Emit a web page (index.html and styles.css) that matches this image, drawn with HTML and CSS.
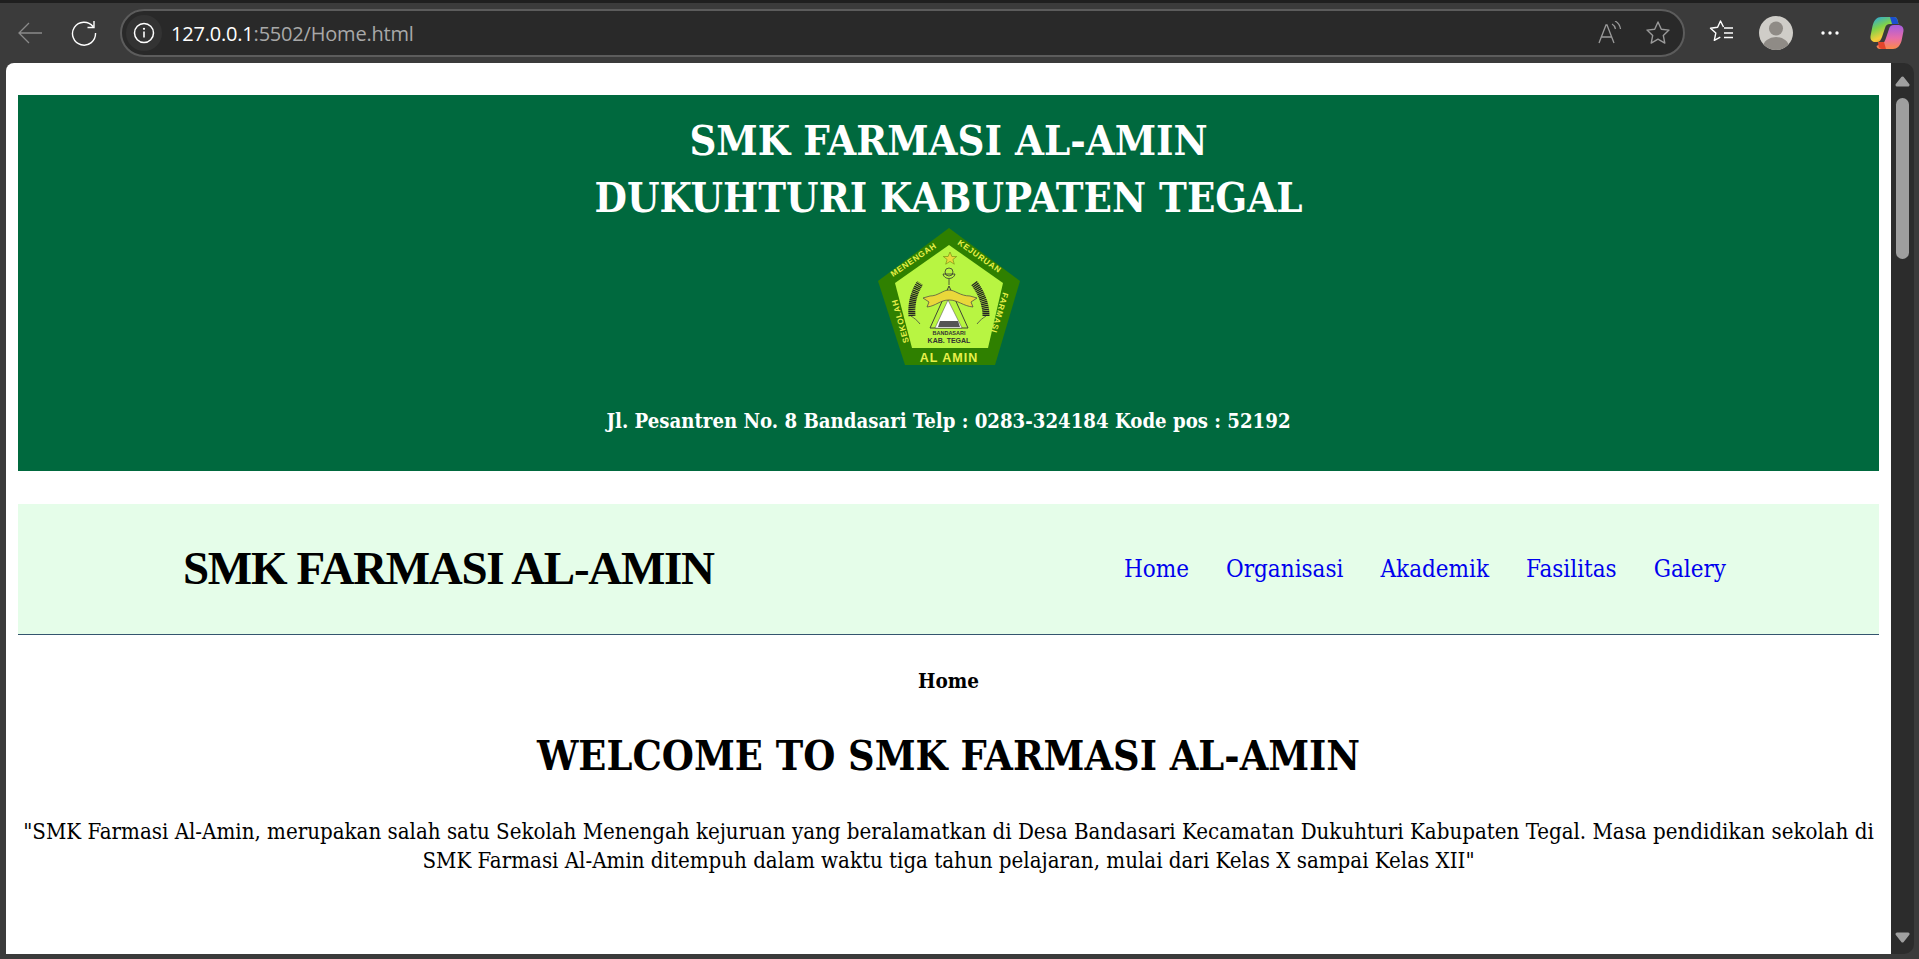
FILE: index.html
```html
<!DOCTYPE html>
<html lang="id">
<head>
<meta charset="utf-8">
<title>Home</title>
<link rel="stylesheet" href="styles.css">
</head>
<body>
<div class="window">
  <div class="tabstrip"></div>
  <header class="toolbar">
    <svg class="tool back" viewBox="0 0 26 26"><path d="M25 13H2M12 3 2 13l10 10" fill="none" stroke="#8a8a8a" stroke-width="1.3"/></svg>
    <svg class="tool reload" viewBox="0 0 26 26"><path d="M22 6.500A11.500 11.500 0 1 0 24.500 13M23 1v6.500h-6.500" fill="none" stroke="#fff" stroke-width="1.400"/></svg>
    <div class="omnibox">
      <span class="site-info"><svg viewBox="0 0 22 22" class="info"><circle cx="11" cy="11" r="9.500" fill="none" stroke="#fff" stroke-width="1.500"/><path d="M11 9.500v6" stroke="#fff" stroke-width="1.600"/><circle cx="11" cy="6.800" r="1.100" fill="#fff"/></svg></span>
      <span class="url"><span class="host">127.0.0.1</span>:5502/Home.html</span>
      <svg class="omni-icon read" viewBox="0 0 24 24"><path d="M1 22 8 4h1l7 18M3.500 16h10M14 3c2 1 3 3 3.500 5M17 0c3 1.500 5 4.500 5.500 8" fill="none" stroke="#9a9a9a" stroke-width="1.300"/></svg>
      <svg class="omni-icon star" viewBox="0 0 26 26"><path d="m13 2 3.300 7.200 7.700.9-5.700 5.300 1.500 7.700-6.800-3.900-6.800 3.900 1.500-7.700L2 10.100l7.700-.9z" fill="none" stroke="#9a9a9a" stroke-width="1.400" stroke-linejoin="round"/></svg>
    </div>
    <svg class="tool favs" viewBox="0 0 26 26"><path d="M14.500 7 11.500 1 8.600 7.300 1.500 8.200l5.300 4.900-1.500 7.300 6-3.300M15 8h9M15 13h9M15 17.500h9" fill="none" stroke="#fff" stroke-width="1.400" stroke-linejoin="round"/></svg>
    <svg class="avatar" viewBox="0 0 34 34"><defs><clipPath id="av"><circle cx="17" cy="17" r="17"/></clipPath></defs><circle cx="17" cy="17" r="17" fill="#cfcdc8"/><g clip-path="url(#av)" fill="#8f8b86"><circle cx="17" cy="12.500" r="7"/><ellipse cx="17" cy="31" rx="13" ry="10"/></g></svg>
    <svg class="tool more" viewBox="0 0 18 6"><circle cx="2" cy="3" r="1.700" fill="#fff"/><circle cx="9" cy="3" r="1.700" fill="#fff"/><circle cx="16" cy="3" r="1.700" fill="#fff"/></svg>
    <svg class="copilot" viewBox="0 0 34 34">
      <defs>
        <linearGradient id="cpl" x1="0" y1="0" x2="0.500" y2="1"><stop offset="0" stop-color="#1fa2f0"/><stop offset=".45" stop-color="#7fd24a"/><stop offset=".8" stop-color="#f4cf3a"/><stop offset="1" stop-color="#f59a3c"/></linearGradient>
        <linearGradient id="cpr" x1="0.500" y1="0" x2="0.500" y2="1"><stop offset="0" stop-color="#a45de0"/><stop offset=".55" stop-color="#e86ca8"/><stop offset="1" stop-color="#f98a4a"/></linearGradient>
      </defs>
      <path d="M18 1h6c2 0 3 1 3.500 3l1 4H20c-3 0-4 1-5 4l-3 9c-1 3-2.500 5-5 5H5c-3 0-5-2.500-4.500-6l2-10C4 4 7 1 11 1z" fill="url(#cpl)"/>
      <path d="M16 33h-6c-2 0-3-1-3.500-3L12 27c2 0 3-2 4-5l3-9c1-3 2-4 5-4h4c3 0 6 2 5.500 6l-2 10C30 30 27 33 23 33z" fill="url(#cpr)"/>
      <path d="M20 1h4c2 0 3 1 3.500 3l1 4H22z" fill="#1b4fd0"/>
      <path d="M8 26h6l2 7h-4c-2 0-3-1-3.500-3z" fill="#e2452b"/>
    </svg>
  </header>
  <div class="viewport">
    <main class="page">
      <section class="banner">
        <h1 class="banner-title">SMK FARMASI AL-AMIN<br>DUKUHTURI KABUPATEN TEGAL</h1>
        <svg class="logo" viewBox="0 0 142 138">
          <defs>
            <path id="arc-top-l" d="M15 49 62 17 90 -2"/>
            <path id="arc-top-r" d="M79 16 126 49 150 66"/>
            <path id="arc-left" d="M31 114 17 64 8 32"/>
            <path id="arc-right" d="M125 64 110 114 100 146"/>
          </defs>
          <path d="M71 0 142 53 117 137H27L0 53z" fill="#2f8000"/>
          <path d="M71 17 125 55 110 120H34L17 55z" fill="#b8f542"/>
          <path d="m72 24 1.900 4.500h4.800l-3.800 3 1.400 4.700-4.300-2.800-4.300 2.800 1.400-4.700-3.800-3h4.800z" fill="#e9d83a" stroke="#6a8a10" stroke-width=".6"/>
          <text class="logo-ring"><textPath href="#arc-top-l">MENENGAH</textPath></text>
          <text class="logo-ring"><textPath href="#arc-top-r">KEJURUAN</textPath></text>
          <text class="logo-ring"><textPath href="#arc-left">SEKOLAH</textPath></text>
          <text class="logo-ring"><textPath href="#arc-right">FARMASI</textPath></text>
          <circle cx="71" cy="44" r="4" fill="none" stroke="#333" stroke-width=".8"/>
          <path d="M65 46c1 6 11 6 12 0z" fill="none" stroke="#333" stroke-width=".8"/>
          <path d="M71 51v6" stroke="#333" stroke-width=".8"/>
          <path d="M71 58 52 100h38z" fill="#b8f542" stroke="#333" stroke-width=".9"/>
          <path d="M70 72 57 100h27z" fill="#fff" stroke="#444" stroke-width=".5"/>
          <path d="M45 70l7-2C60 68 65 62 71 62s11 6 21 6l7 2-6 4 2 5C85 78 80 72 71 72s-13 6-22 7l2-5z" fill="#e9d83a" stroke="#444" stroke-width=".7"/>
          <path d="M62 93h18l2 6H60z" fill="#555"/>
          <path d="M34 88c-1-12 2-24 8-33" fill="none" stroke="#222" stroke-width="7" stroke-dasharray="1.300 .6"/>
          <path d="M33 88c3 2 6 4 9 8" fill="none" stroke="#444" stroke-width=".8"/>
          <path d="M108 88c0-12-5-24-12-33" fill="none" stroke="#222" stroke-width="7" stroke-dasharray="1.300 .6"/>
          <path d="M108 88c-3 2-6 4-9 8" fill="none" stroke="#444" stroke-width=".8"/>
          <text class="logo-small" x="71" y="107">BANDASARI</text>
          <text class="logo-mid" x="71" y="115">KAB. TEGAL</text>
          <text class="logo-name" x="71" y="134">AL AMIN</text>
        </svg>
        <p class="address">Jl. Pesantren No. 8 Bandasari Telp : 0283-324184 Kode pos : 52192</p>
      </section>
      <nav class="navbar">
        <span class="brand">SMK FARMASI AL-AMIN</span>
        <div class="nav-links">
          <a href="#">Home</a>
          <a href="#">Organisasi</a>
          <a href="#">Akademik</a>
          <a href="#">Fasilitas</a>
          <a href="#">Galery</a>
        </div>
      </nav>
      <section class="content">
        <h3 class="crumb">Home</h3>
        <h2 class="welcome">WELCOME TO SMK FARMASI AL-AMIN</h2>
        <p class="intro">"SMK Farmasi Al-Amin, merupakan salah satu Sekolah Menengah kejuruan yang beralamatkan di Desa Bandasari Kecamatan Dukuhturi Kabupaten Tegal. Masa pendidikan sekolah di SMK Farmasi Al-Amin ditempuh dalam waktu tiga tahun pelajaran, mulai dari Kelas X sampai Kelas XII"</p>
      </section>
    </main>
    <aside class="scrollbar">
      <svg class="sb-arrow" viewBox="0 0 15 11"><path d="M7.500 2 13 9H2z" fill="#a0a0a0" stroke="#a0a0a0" stroke-width="3" stroke-linejoin="round"/></svg>
      <span class="thumb"></span>
      <svg class="sb-arrow sb-down" viewBox="0 0 15 11"><path d="M7.500 9 13 2H2z" fill="#a0a0a0" stroke="#a0a0a0" stroke-width="3" stroke-linejoin="round"/></svg>
    </aside>
  </div>
</div>
</body>
</html>
```
FILE: styles.css
```css
* { box-sizing: border-box; }
html, body { margin: 0; height: 100%; overflow: hidden; }
body { background: #3b3b3b; font-family: "DejaVu Serif Condensed", "DejaVu Serif", serif; }
.window { width: 1919px; height: 959px; display: flex; flex-direction: column; }
.tabstrip { height: 3px; background: #1f1f1f; }
.toolbar { height: 60px; background: #3b3b3b; display: flex; align-items: center; padding: 0 0 0 17px; }
.tool { flex: none; display: block; }
.back { width: 26px; height: 26px; }
.reload { width: 26px; height: 26px; margin-left: 28px; }
.omnibox { width: 1565px; height: 48px; margin-left: 23px; border: 2px solid #5c5c5c; border-radius: 24px; background: #292929; display: flex; align-items: center; padding-left: 4px; }
.site-info { width: 36px; height: 36px; border-radius: 50%; background: #333; display: flex; align-items: center; justify-content: center; flex: none; }
.info { width: 22px; height: 22px; }
.url { font: 20px "Open Sans", sans-serif; color: #a8a8a8; margin-left: 9px; flex: 1; letter-spacing: -.2px; }
.host { color: #fff; }
.omni-icon { flex: none; }
.read { width: 24px; height: 24px; margin-right: 23px; }
.star { width: 26px; height: 26px; margin-right: 12px; }
.favs { width: 26px; height: 26px; margin-left: 24px; }
.avatar { width: 34px; height: 34px; margin-left: 24px; flex: none; }
.more { width: 18px; height: 6px; margin-left: 28px; }
.copilot { width: 34px; height: 34px; margin-left: 31px; flex: none; }
.viewport { flex: 1; display: flex; padding: 0 5px 5px 6px; min-height: 0; }
.page { flex: 1; min-width: 0; background: #fff; border-radius: 8px 0 0 0; padding: 32px 12px 0; overflow: hidden; }
.banner { height: 376px; background: #00693e; color: #fff; text-align: center; padding-top: 17px; }
.banner-title { margin: 0; font-size: 41.5px; line-height: 57px; font-weight: 700; }
.logo { display: block; width: 142px; height: 138px; margin: 2px auto 0; }
.logo-ring { font: 700 8.200px "Liberation Sans", sans-serif; fill: #e8f04a; letter-spacing: .7px; }
.logo-small { font: 700 5.500px "Liberation Sans", sans-serif; fill: #333; text-anchor: middle; }
.logo-mid { font: 700 7px "Liberation Sans", sans-serif; fill: #333; text-anchor: middle; }
.logo-name { font: 700 12.500px "Liberation Sans", sans-serif; fill: #e8f04a; text-anchor: middle; letter-spacing: 1px; }
.address { margin: 42px 0 0; font-size: 20.2px; line-height: 26px; font-weight: 700; }
.navbar { height: 131px; margin-top: 33px; background: #e5fde9; border-bottom: 1px solid #34556e; display: flex; align-items: center; justify-content: space-between; padding: 0 153px 0 165px; }
.brand { font-family: "Liberation Serif", serif; font-size: 47px; font-weight: 700; color: #000; letter-spacing: -1.300px; margin-bottom: 2px; }
.nav-links { display: flex; gap: 37px; }
.nav-links a { font-size: 24px; color: #0000ee; text-decoration: none; }
.content { text-align: center; color: #000; }
.crumb { margin: 32px 0 0; font-size: 20.5px; line-height: 28px; font-weight: 700; }
.welcome { margin: 33px 0 0; font-size: 41px; line-height: 56px; font-weight: 700; }
.intro { margin: 33px 0 0; font-size: 22.1px; line-height: 29px; }
.scrollbar { width: 23px; background: #2c2c2c; border-radius: 0 10px 10px 0; display: flex; flex-direction: column; align-items: center; padding: 13px 0 11px; }
.sb-arrow { width: 15px; height: 11px; flex: none; }
.thumb { width: 13px; height: 161px; margin-top: 11px; border-radius: 7px; background: #9e9e9e; }
.sb-down { margin-top: auto; }
```
